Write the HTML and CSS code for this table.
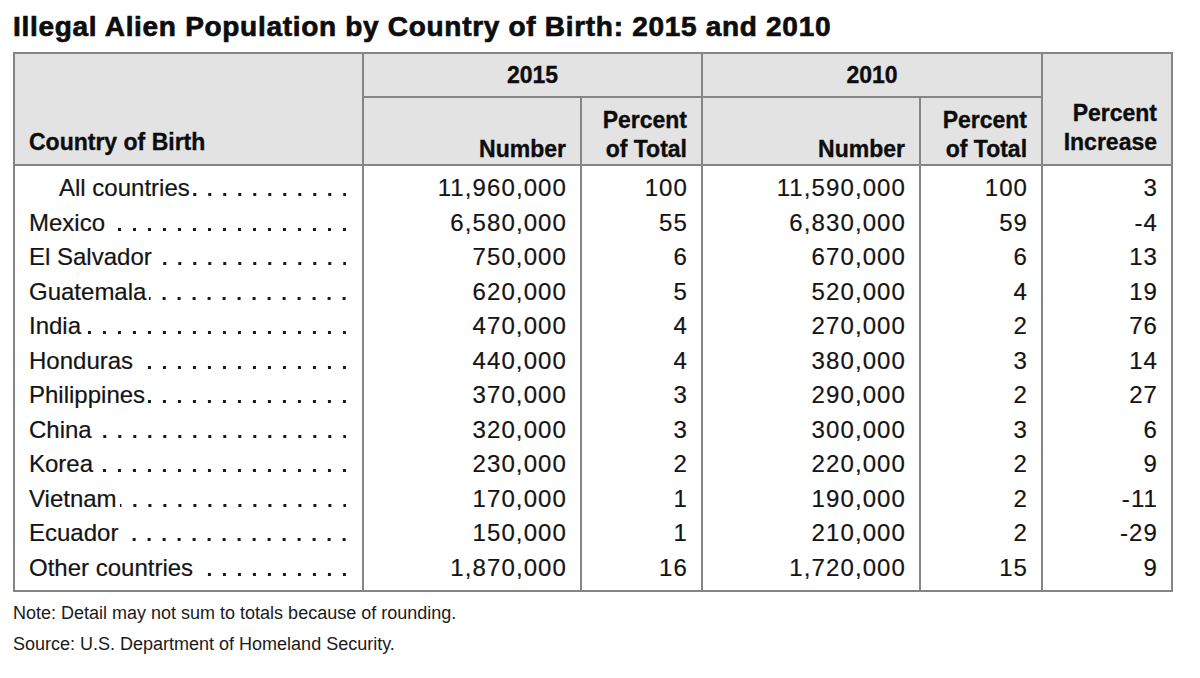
FILE: index.html
```html
<!DOCTYPE html>
<html lang="en">
<head>
<meta charset="utf-8">
<title>Illegal Alien Population by Country of Birth: 2015 and 2010</title>
<link rel="stylesheet" href="styles.css">
</head>
<body>
<div class="page">
  <h1 class="title">Illegal Alien Population by Country of Birth: 2015 and 2010</h1>
  <table class="data">
    <colgroup>
      <col class="c-country">
      <col class="c-num">
      <col class="c-pct">
      <col class="c-num">
      <col class="c-pct2">
      <col class="c-inc">
    </colgroup>
    <thead>
      <tr class="h1">
        <th rowspan="2" class="h-country">Country of Birth</th>
        <th colspan="2" class="h-year">2015</th>
        <th colspan="2" class="h-year">2010</th>
        <th rowspan="2" class="h-inc">Percent<br>Increase</th>
      </tr>
      <tr class="h2">
        <th class="h-sub">Number</th>
        <th class="h-sub">Percent<br>of Total</th>
        <th class="h-sub">Number</th>
        <th class="h-sub">Percent<br>of Total</th>
      </tr>
    </thead>
    <tbody>
      <tr class="first"><td class="country indent"><div class="cw"><span class="name">All countries</span><span class="lead"></span></div></td><td class="n">11,960,000</td><td class="n">100</td><td class="n">11,590,000</td><td class="n">100</td><td class="n">3</td></tr>
      <tr><td class="country"><div class="cw"><span class="name">Mexico</span><span class="lead"></span></div></td><td class="n">6,580,000</td><td class="n">55</td><td class="n">6,830,000</td><td class="n">59</td><td class="n">-4</td></tr>
      <tr><td class="country"><div class="cw"><span class="name">El Salvador</span><span class="lead"></span></div></td><td class="n">750,000</td><td class="n">6</td><td class="n">670,000</td><td class="n">6</td><td class="n">13</td></tr>
      <tr><td class="country"><div class="cw"><span class="name">Guatemala</span><span class="lead"></span></div></td><td class="n">620,000</td><td class="n">5</td><td class="n">520,000</td><td class="n">4</td><td class="n">19</td></tr>
      <tr><td class="country"><div class="cw"><span class="name">India</span><span class="lead"></span></div></td><td class="n">470,000</td><td class="n">4</td><td class="n">270,000</td><td class="n">2</td><td class="n">76</td></tr>
      <tr><td class="country"><div class="cw"><span class="name">Honduras</span><span class="lead"></span></div></td><td class="n">440,000</td><td class="n">4</td><td class="n">380,000</td><td class="n">3</td><td class="n">14</td></tr>
      <tr><td class="country"><div class="cw"><span class="name">Philippines</span><span class="lead"></span></div></td><td class="n">370,000</td><td class="n">3</td><td class="n">290,000</td><td class="n">2</td><td class="n">27</td></tr>
      <tr><td class="country"><div class="cw"><span class="name">China</span><span class="lead"></span></div></td><td class="n">320,000</td><td class="n">3</td><td class="n">300,000</td><td class="n">3</td><td class="n">6</td></tr>
      <tr><td class="country"><div class="cw"><span class="name">Korea</span><span class="lead"></span></div></td><td class="n">230,000</td><td class="n">2</td><td class="n">220,000</td><td class="n">2</td><td class="n">9</td></tr>
      <tr><td class="country"><div class="cw"><span class="name">Vietnam</span><span class="lead"></span></div></td><td class="n">170,000</td><td class="n">1</td><td class="n">190,000</td><td class="n">2</td><td class="n">-11</td></tr>
      <tr><td class="country"><div class="cw"><span class="name">Ecuador</span><span class="lead"></span></div></td><td class="n">150,000</td><td class="n">1</td><td class="n">210,000</td><td class="n">2</td><td class="n">-29</td></tr>
      <tr class="last"><td class="country"><div class="cw"><span class="name">Other countries</span><span class="lead"></span></div></td><td class="n">1,870,000</td><td class="n">16</td><td class="n">1,720,000</td><td class="n">15</td><td class="n">9</td></tr>
    </tbody>
  </table>
  <div class="notes">
    <p class="note">Note: Detail may not sum to totals because of rounding.</p>
    <p class="note">Source: U.S. Department of Homeland Security.</p>
  </div>
</div>
</body>
</html>
```

FILE: styles.css
```css
html, body {
  margin: 0;
  padding: 0;
  background: #ffffff;
}

body {
  font-family: "Liberation Sans", Arial, sans-serif;
  color: #141414;
}

.page {
  padding: 11px 0 0 13px;
}

.title {
  margin: 0 0 9px 0;
  font-size: 28px;
  line-height: 32px;
  font-weight: 700;
  letter-spacing: 0.7px;
  color: #0d0d0d;
  -webkit-text-stroke: 0.7px #0d0d0d;
  white-space: nowrap;
}

.data {
  border-collapse: collapse;
  table-layout: fixed;
  width: 1160px;
}

.c-country { width: 349px; }
.c-num { width: 218px; }
.c-pct { width: 121px; }
.c-pct2 { width: 122px; }
.c-inc { width: 130px; }

.data th,
.data td {
  border: 2px solid #858585;
  padding: 0;
}

.data th {
  background: #e3e3e3;
  font-size: 23px;
  font-weight: 700;
  line-height: 29px;
  color: #0d0d0d;
  -webkit-text-stroke: 0.35px #0d0d0d;
}

.h1 th { height: 42px; }
.h2 th { height: 66px; }

.h-year {
  text-align: center;
  vertical-align: middle;
  padding-top: 1px;
}

.h-country {
  text-align: left;
  vertical-align: bottom;
  padding: 0 14px 7px 14px !important;
}

.h-inc {
  text-align: right;
  vertical-align: bottom;
  padding: 0 14px 7px 0 !important;
}

.h-sub {
  text-align: right;
  vertical-align: bottom;
  padding: 0 14px 0 0 !important;
}

.data td {
  border-top: none;
  border-bottom: none;
  font-size: 24px;
  line-height: 34.5px;
  color: #141414;
  -webkit-text-stroke: 0.2px #141414;
}

.data tr.first td { padding-top: 5px; }
.data tr.last td { padding-bottom: 5px; border-bottom: 2px solid #858585; }

.data td.n {
  text-align: right;
  letter-spacing: 1.1px;
  padding-right: 13px;
}

.data td.country {
  padding-left: 14px;
  padding-right: 16px;
}

.data td.country.indent {
  padding-left: 44px;
}

.cw {
  display: flex;
  align-items: stretch;
}

.name {
  flex: none;
  white-space: nowrap;
}

.lead {
  flex: 1;
  margin-left: 3px;
  background-image: linear-gradient(to right, transparent 12px, #1a1a1a 12px);
  background-size: 15px 3px;
  background-repeat: repeat-x;
  background-position: right 0 top 22px;
}

.notes {
  margin-top: 6px;
}

.note {
  margin: 0;
  font-size: 18px;
  line-height: 31px;
  color: #1a1a1a;
}
```
